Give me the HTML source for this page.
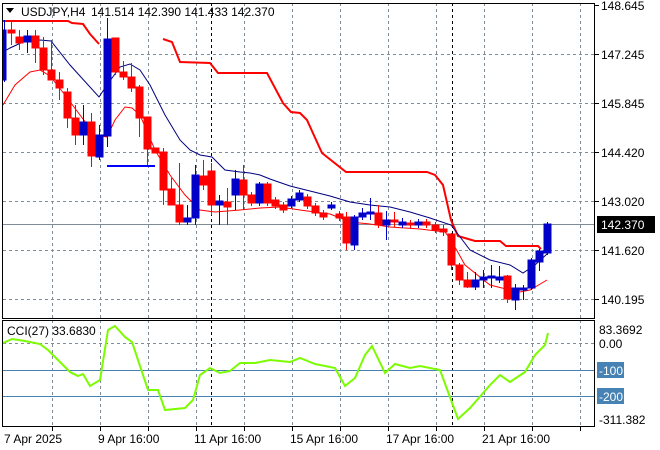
<!DOCTYPE html>
<html><head><meta charset="utf-8"><style>
html,body{margin:0;padding:0;background:#fff;width:660px;height:450px;overflow:hidden}
svg{display:block}
text{font-family:"Liberation Sans",sans-serif;font-size:12px;fill:#000;white-space:pre}
</style></head><body>
<svg width="660" height="450" viewBox="0 0 660 450" xmlns="http://www.w3.org/2000/svg">
<g stroke="#7f8c99" stroke-width="1" stroke-dasharray="3,3" fill="none">
<path d="M52.5 3V318M100.5 3V318M148.5 3V318M196.5 3V318M244.5 3V318M292.5 3V318M340.5 3V318M388.5 3V318M436.5 3V318M484.5 3V318M532.5 3V318M580.5 3V318"/>
<path d="M3 54.5H595M3 103.5H595M3 152.5H595M3 201.5H595M3 250.5H595M3 299.5H595"/>
<path d="M52.5 320V426M100.5 320V426M148.5 320V426M196.5 320V426M244.5 320V426M292.5 320V426M340.5 320V426M388.5 320V426M436.5 320V426M484.5 320V426M532.5 320V426M580.5 320V426"/>
<path d="M3 343.5H595"/>
</g>
<path d="M211.5 3V318M452.5 3V318M211.5 320V426M452.5 320V426" stroke="#000" stroke-dasharray="3,3"/>
<path d="M3 224.5H595" stroke="#7f8c99"/>
<path d="M3 370.5H595M3 396.5H595" stroke="#4682b4"/>
<polyline fill="none" stroke="#f00" stroke-width="2" points="3,21 68,21 72,23 83,24 90,34 99,44"/>
<polyline fill="none" stroke="#f00" stroke-width="2" points="163,39 172,42 180,62 210,63 218,73 267,73 275,88 283,103 291,112 300,113 307,120 322,153 346,172 427,172 435,175 443,185 451,220 458,236 475,241 500,241 506,246 538,246 541,249"/>
<path d="M107 166H155" stroke="#0000ff" stroke-width="2"/>
<polyline fill="none" stroke="#000080" points="3,52 10,48 25,41 40,40 51,41 70,65 99,97 107,85 120,67 130,64 140,70 150,85 165,115 180,140 190,150 200,155 212,157 225,170 240,172 250,173 260,175 270,179 290,186 310,191 330,196 350,202 370,205 390,207 410,212 430,218 451,225 470,250 490,260 510,265 523,273 535,265 547,254"/>
<polyline fill="none" stroke="#f00" points="3,105 15,85 30,72 40,70 50,76 65,95 80,115 95,135 107,137 115,120 125,107 132,108 140,115 155,150 170,175 185,195 200,210 215,212 240,210 260,208 280,207 300,210 330,214 350,222 370,224 390,227 420,229 445,232 451,240 465,265 490,285 510,290 520,292 530,290 547,280"/>
<g stroke-width="1">
<g stroke="#f00" fill="#f00">
<path d="M11.5 22V45M19.5 30V50M35.5 30V63M43.5 37V75M51.5 40V80M59.5 72V100M67.5 88V128M75.5 105V145M91.5 113V167M115.5 38V75M123.5 61V80M131.5 63V92M139.5 85V137M147.5 117V165M163.5 148V205M171.5 178V205M179.5 163V225M203.5 160V190M211.5 163V215M227.5 188V225M243.5 165V210M251.5 192V206M267.5 182V206M275.5 197V209M283.5 202V213M307.5 194V209M315.5 203V216M323.5 210V220M339.5 211V221M346.5 212V250M378.5 205V228M394.5 212V227M410.5 220V228M426.5 219V228M435.5 222V233M443.5 225V236M451.5 233V270M459.5 263V285M467.5 272V288M507.5 275V303"/>
<rect x="8" y="30" width="7" height="3"/><rect x="16" y="37" width="7" height="6"/><rect x="32" y="36" width="7" height="12"/><rect x="40" y="48" width="7" height="22"/><rect x="48" y="70" width="7" height="10"/><rect x="56" y="80" width="7" height="8"/><rect x="64" y="92" width="7" height="26"/><rect x="72" y="118" width="7" height="17"/><rect x="88" y="122" width="7" height="34"/><rect x="112" y="38" width="7" height="34"/><rect x="120" y="72" width="7" height="5"/><rect x="128" y="77" width="7" height="11"/><rect x="136" y="87" width="7" height="31"/><rect x="144" y="117" width="7" height="32"/><rect x="152" y="148" width="7" height="5"/><rect x="160" y="152" width="7" height="38"/><rect x="168" y="189" width="7" height="16"/><rect x="176" y="205" width="7" height="17"/><rect x="200" y="176" width="7" height="9"/><rect x="208" y="171" width="7" height="34"/><rect x="224" y="202" width="7" height="5"/><rect x="240" y="180" width="7" height="15"/><rect x="248" y="195" width="7" height="8"/><rect x="264" y="184" width="7" height="19"/><rect x="272" y="200" width="7" height="6"/><rect x="280" y="205" width="7" height="5"/><rect x="304" y="197" width="7" height="9"/><rect x="312" y="206" width="7" height="7"/><rect x="320" y="213" width="7" height="4"/><rect x="336" y="214" width="7" height="4"/><rect x="343" y="217" width="7" height="26"/><rect x="375" y="213" width="7" height="12"/><rect x="391" y="220" width="7" height="2"/><rect x="407" y="223" width="7" height="2"/><rect x="423" y="222" width="7" height="3"/><rect x="432" y="225" width="7" height="5"/><rect x="440" y="229" width="7" height="3"/><rect x="448" y="234" width="7" height="31"/><rect x="456" y="265" width="7" height="15"/><rect x="464" y="280" width="7" height="7"/><rect x="504" y="276" width="7" height="23"/>
</g>
<g stroke="#0000c8" fill="#0000c8">
<path d="M4.5 20V82M27.5 30V53M83.5 105V145M99.5 125V160M107.5 18V147M187.5 205V225M195.5 165V225M219.5 195V225M235.5 170V210M259.5 182V206M291.5 196V208M299.5 190V202M331.5 202V210M354.5 215V250M362.5 208V220M370.5 198V220M386.5 211V240M402.5 218V228M418.5 219V228M475.5 272V290M483.5 270V288M491.5 265V288M499.5 266V283M515.5 284V310M523.5 285V300M531.5 258V290M539.5 249V271M547.5 222V255"/>
<rect x="3" y="30" width="3" height="50"/><rect x="24" y="36" width="7" height="6"/><rect x="80" y="122" width="7" height="13"/><rect x="96" y="135" width="7" height="22"/><rect x="104" y="39" width="7" height="97"/><rect x="184" y="218" width="7" height="4"/><rect x="192" y="175" width="7" height="43"/><rect x="216" y="201" width="7" height="4"/><rect x="232" y="179" width="7" height="16"/><rect x="256" y="184" width="7" height="19"/><rect x="288" y="199" width="7" height="7"/><rect x="296" y="193" width="7" height="7"/><rect x="328" y="205" width="7" height="3"/><rect x="351" y="217" width="7" height="28"/><rect x="359" y="213" width="7" height="4"/><rect x="367" y="212" width="7" height="2"/><rect x="383" y="220" width="7" height="5"/><rect x="399" y="222" width="7" height="3"/><rect x="415" y="222" width="7" height="3"/><rect x="472" y="280" width="7" height="7"/><rect x="480" y="277" width="7" height="3"/><rect x="488" y="276" width="7" height="2"/><rect x="496" y="277" width="7" height="3"/><rect x="512" y="288" width="7" height="12"/><rect x="520" y="288" width="7" height="2"/><rect x="528" y="260" width="7" height="28"/><rect x="536" y="251" width="7" height="11"/><rect x="544" y="224" width="7" height="29"/>
</g>
</g>
<polyline fill="none" stroke="#7cfc00" stroke-width="2" points="3,343 12,339 25,341 40,344 48,350 60,362 70,372 78,376 83,374 90,386 100,380 108,330 115,326 125,337 132,342 148,390 158,390 165,410 185,408 193,400 200,375 210,368 220,373 230,371 240,363 255,363 270,360 290,362 300,358 315,364 325,366 335,368 345,386 355,378 365,355 372,346 385,373 395,364 410,368 420,366 440,370 458,419 470,408 490,385 500,375 510,382 525,372 535,355 545,345 548,333"/>
<rect x="2.5" y="3.5" width="592" height="315" fill="none" stroke="#000"/>
<rect x="2.5" y="320.5" width="592" height="106" fill="none" stroke="#000"/>
<path d="M595 5.5H599M595 54.5H599M595 103.5H599M595 152.5H599M595 201.5H599M595 250.5H599M595 299.5H599" stroke="#000"/>
<path d="M52.5 427V431M100.5 427V431M148.5 427V431M196.5 427V431M244.5 427V431M292.5 427V431M340.5 427V431M388.5 427V431M436.5 427V431M484.5 427V431M532.5 427V431M580.5 427V431" stroke="#000"/>
<path d="M6 8H14L10 13Z" fill="#000"/>
<text x="21" y="16">USDJPY,H4</text>
<text x="91" y="16">141.514 142.390 141.433 142.370</text>
<text x="7" y="335">CCI(27) 33.6830</text>
<text x="601" y="10">148.645</text>
<text x="601" y="59">147.245</text>
<text x="601" y="108">145.845</text>
<text x="601" y="157">144.420</text>
<text x="601" y="206">143.020</text>
<rect x="597" y="216" width="58" height="17" fill="#000"/>
<text x="601" y="229" style="fill:#fff">142.370</text>
<text x="601" y="255">141.620</text>
<text x="601" y="304">140.195</text>
<text x="599" y="334">83.3692</text>
<text x="599" y="348">0.00</text>
<rect x="597" y="362" width="27" height="16" fill="#4682b4"/>
<text x="599" y="375" style="fill:#fff">-100</text>
<rect x="597" y="388" width="27" height="16" fill="#4682b4"/>
<text x="599" y="401" style="fill:#fff">-200</text>
<text x="599" y="424">-311.382</text>
<text x="4" y="443">7 Apr 2025</text>
<text x="98" y="443">9 Apr 16:00</text>
<text x="194" y="443">11 Apr 16:00</text>
<text x="290" y="443">15 Apr 16:00</text>
<text x="386" y="443">17 Apr 16:00</text>
<text x="482" y="443">21 Apr 16:00</text>
</svg>
</body></html>
